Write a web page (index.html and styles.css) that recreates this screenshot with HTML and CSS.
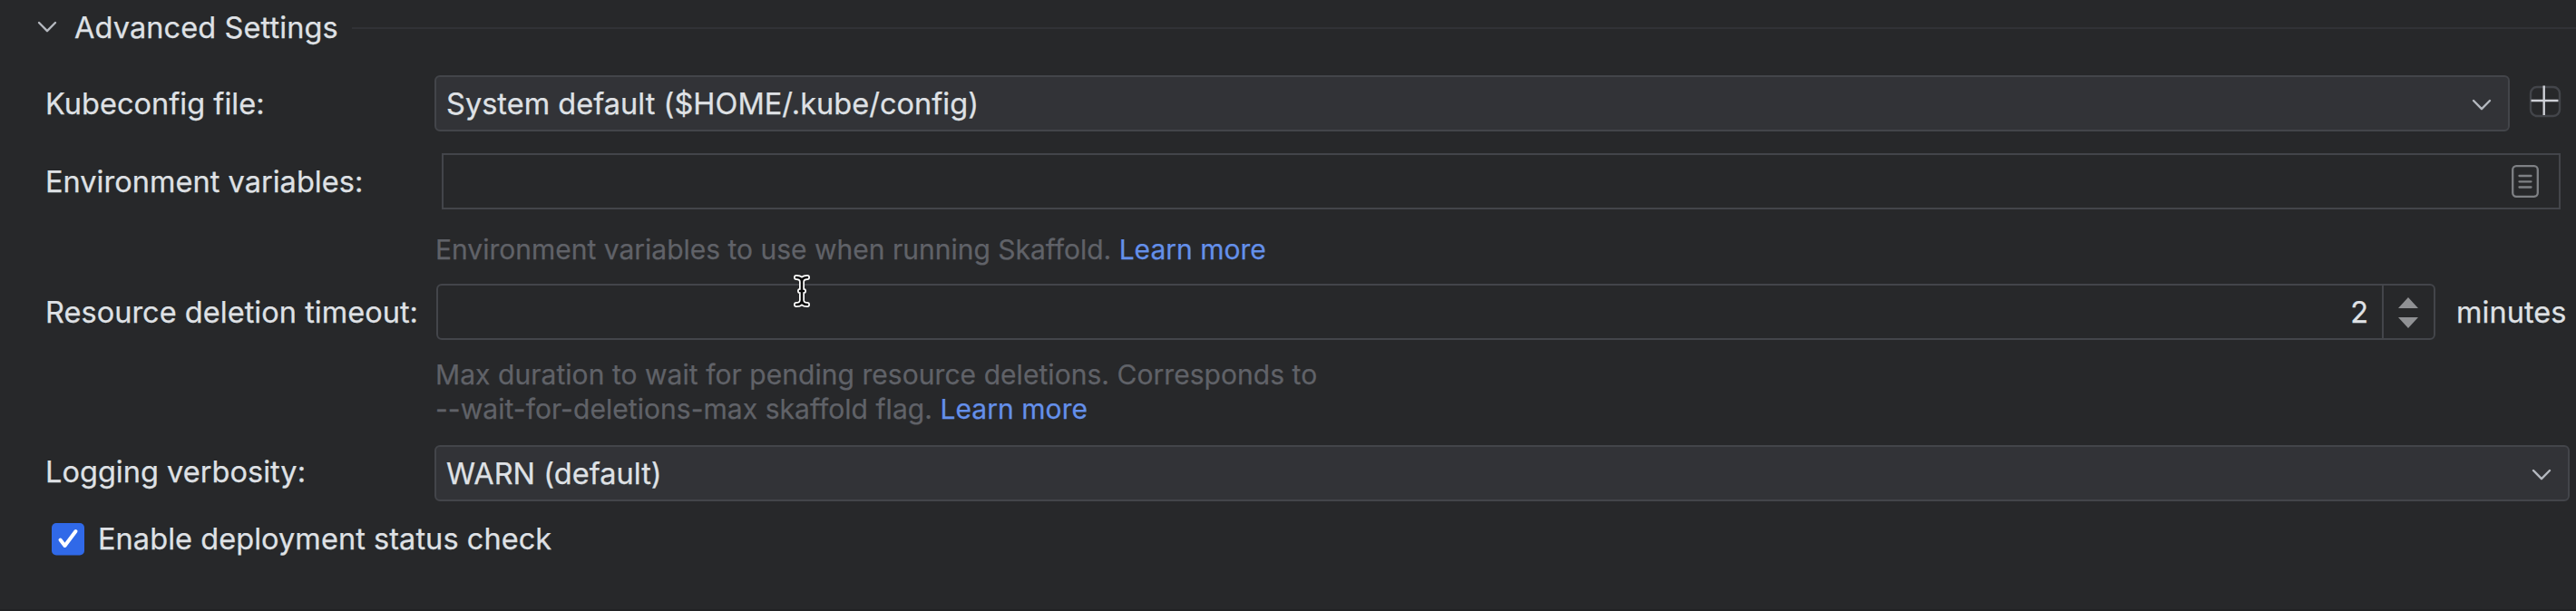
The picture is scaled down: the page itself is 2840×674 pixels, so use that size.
FILE: index.html
```html
<!DOCTYPE html>
<html lang="en">
<head>
<meta charset="utf-8">
<title>Advanced Settings</title>
<link rel="stylesheet" href="styles.css">
</head>
<body>
<main class="panel">
  <header class="section">
    <svg class="section-arrow" width="24" height="16" viewBox="0 0 24 16"><path d="M3 3l9 9.200l9-9.200"/></svg>
    <h1 class="section-title">Advanced Settings</h1>
    <div class="section-line"></div>
  </header>

  <div class="row row-kube">
    <label class="label">Kubeconfig file:</label>
    <div class="select">
      <span class="text">System default ($HOME/.kube/config)</span>
      <svg class="arrow" width="24" height="16" viewBox="0 0 24 16"><path d="M3 3l9 9.200l9-9.200"/></svg>
    </div>
    <button class="add" aria-label="Add">
      <svg width="36" height="36" viewBox="0 0 36 36"><rect class="add-box" x="2" y="2" width="32" height="32" rx="7"/><path class="add-plus" d="M16.700 0.500V33M2.500 17H32.500"/></svg>
    </button>
  </div>

  <div class="row row-env">
    <label class="label">Environment variables:</label>
    <div class="field">
      <svg width="30" height="36" viewBox="0 0 30 36"><rect x="1.200" y="1.200" width="27.600" height="33.600" rx="4"/><path d="M8.500 12H21.500M8.500 18.300H21.500M8.500 24.500H21.500"/></svg>
    </div>
  </div>
  <p class="help help-env">Environment variables to use when running Skaffold. <a class="link">Learn more</a></p>

  <div class="row row-timeout">
    <label class="label">Resource deletion timeout:</label>
    <div class="spinner">
      <span class="value">2</span>
      <div class="steps">
        <svg width="22" height="34" viewBox="0 0 22 34"><path d="M11 0L22 12H0zM0 22H22L11 34z"/></svg>
      </div>
    </div>
    <span class="unit">minutes</span>
  </div>
  <p class="help help-timeout">Max duration to wait for pending resource deletions. Corresponds to<br>--wait-for-deletions-max skaffold flag. <a class="link">Learn more</a></p>

  <div class="row row-log">
    <label class="label label-log">Logging verbosity:</label>
    <div class="select">
      <span class="text">WARN (default)</span>
      <svg class="arrow" width="24" height="16" viewBox="0 0 24 16"><path d="M3 3l9 9.200l9-9.200"/></svg>
    </div>
  </div>

  <label class="check">
    <svg width="36" height="36" viewBox="0 0 36 36"><rect width="36" height="35.500" rx="5"/><path d="M9.500 18.500L14.500 25L26.500 9"/></svg>
    <span>Enable deployment status check</span>
  </label>

  <svg class="cursor" width="18" height="38" viewBox="0 0 18 38">
    <path class="cursor-edge" d="M3 4Q9 4 9 9V29Q9 34 3 34M15 4Q9 4 9 9M9 29Q9 34 15 34M7 19H11"/>
    <path class="cursor-core" d="M3 4Q9 4 9 9V29Q9 34 3 34M15 4Q9 4 9 9M9 29Q9 34 15 34M7 19H11"/>
  </svg>
</main>
</body>
</html>
```
FILE: styles.css
```css
* { box-sizing: border-box; }

body {
  margin: 0;
  background: #27282a;
  color: #dfe1e5;
  font-family: Inter, "Liberation Sans", sans-serif;
  font-size: 32.5px;
  letter-spacing: 0.03px;
  line-height: 40px;
  white-space: nowrap;
  -webkit-text-stroke: 0.25px currentColor;
}

.panel {
  position: relative;
  height: 674px;
  overflow: hidden;
  border-bottom: 2px solid #212224;
}

.section { display: flex; align-items: center; height: 60px; padding-left: 40px; }
.section-arrow { margin-right: 18px; }
.section-title { margin: 0; padding-top: 2px; width: 306px; font-size: inherit; font-weight: 400; letter-spacing: 0.1px; }
.section-line { flex: 1; height: 2px; margin-top: 2px; background: #313236; }

.row { display: flex; align-items: center; height: 62px; padding-left: 50px; }
.label { flex: none; width: 429px; padding-top: 2px; }
.row-kube { margin-top: 23px; padding-right: 16px; }
.row-env { margin-top: 24px; padding-right: 17px; }
.row-timeout { margin-top: 19px; padding-right: 9px; }
.row-log { margin-top: 21px; padding-right: 7px; }
.label-log { margin-top: -4px; }

.select {
  display: flex;
  align-items: center;
  justify-content: space-between;
  flex: 1;
  height: 62px;
  padding: 0 17px 0 11px;
  border: 2px solid #43454a;
  border-radius: 6px;
  background: #323337;
}
.text { padding-top: 2px; }

.section-arrow, .arrow { fill: none; stroke: #b4b8bf; stroke-width: 2.4; stroke-linecap: round; stroke-linejoin: round; }
.arrow { margin-top: 4px; }

.add { width: 36px; height: 36px; margin: -4px 0 0 21px; padding: 0; border: 0; background: none; }
.add svg, .field svg, .steps svg, .check svg { display: block; flex: none; }
.add-box { fill: none; stroke: #43454a; stroke-width: 2.4; }
.add-plus { fill: none; stroke: #ced0d6; stroke-width: 2.4; }

.field {
  display: flex;
  align-items: center;
  justify-content: flex-end;
  flex: 1;
  height: 62px;
  margin-left: 8px;
  padding-right: 22px;
  border: 2px solid #43454a;
}
.field svg { fill: none; stroke: #7e8084; stroke-width: 2.3; stroke-linecap: round; }

.help { margin: 0 0 0 480px; font-size: 30px; line-height: 38px; letter-spacing: 0; color: #606268; }
.help-env { margin-top: 25px; }
.help-timeout { margin-top: 19px; letter-spacing: 0.05px; }
.link { color: #6490ea; }

.spinner {
  display: flex;
  flex: 1;
  height: 62px;
  margin-left: 2px;
  border: 2px solid #43454a;
  border-radius: 6px;
}
.value { flex: 1; padding: 10px 15px 0 0; text-align: right; }
.steps {
  display: flex;
  align-items: center;
  width: 57px;
  padding: 2px 0 0 16px;
  border-left: 2px solid #43454a;
}
.steps path { fill: #909194; }
.unit { width: 123px; margin-left: 23px; padding-top: 2px; }

.check { display: flex; align-items: center; height: 36px; margin: 24px 0 0 57px; letter-spacing: 0.06px; }
.check svg { margin-right: 15px; }
.check rect { fill: #3069e8; }
.check path { fill: none; stroke: #fff; stroke-width: 4; stroke-linecap: round; stroke-linejoin: round; }

.cursor { position: absolute; left: 875px; top: 302px; fill: none; stroke-linecap: round; }
.cursor-edge { stroke: #fff; stroke-width: 6; }
.cursor-core { stroke: #0a0a0a; stroke-width: 2.6; }
```
